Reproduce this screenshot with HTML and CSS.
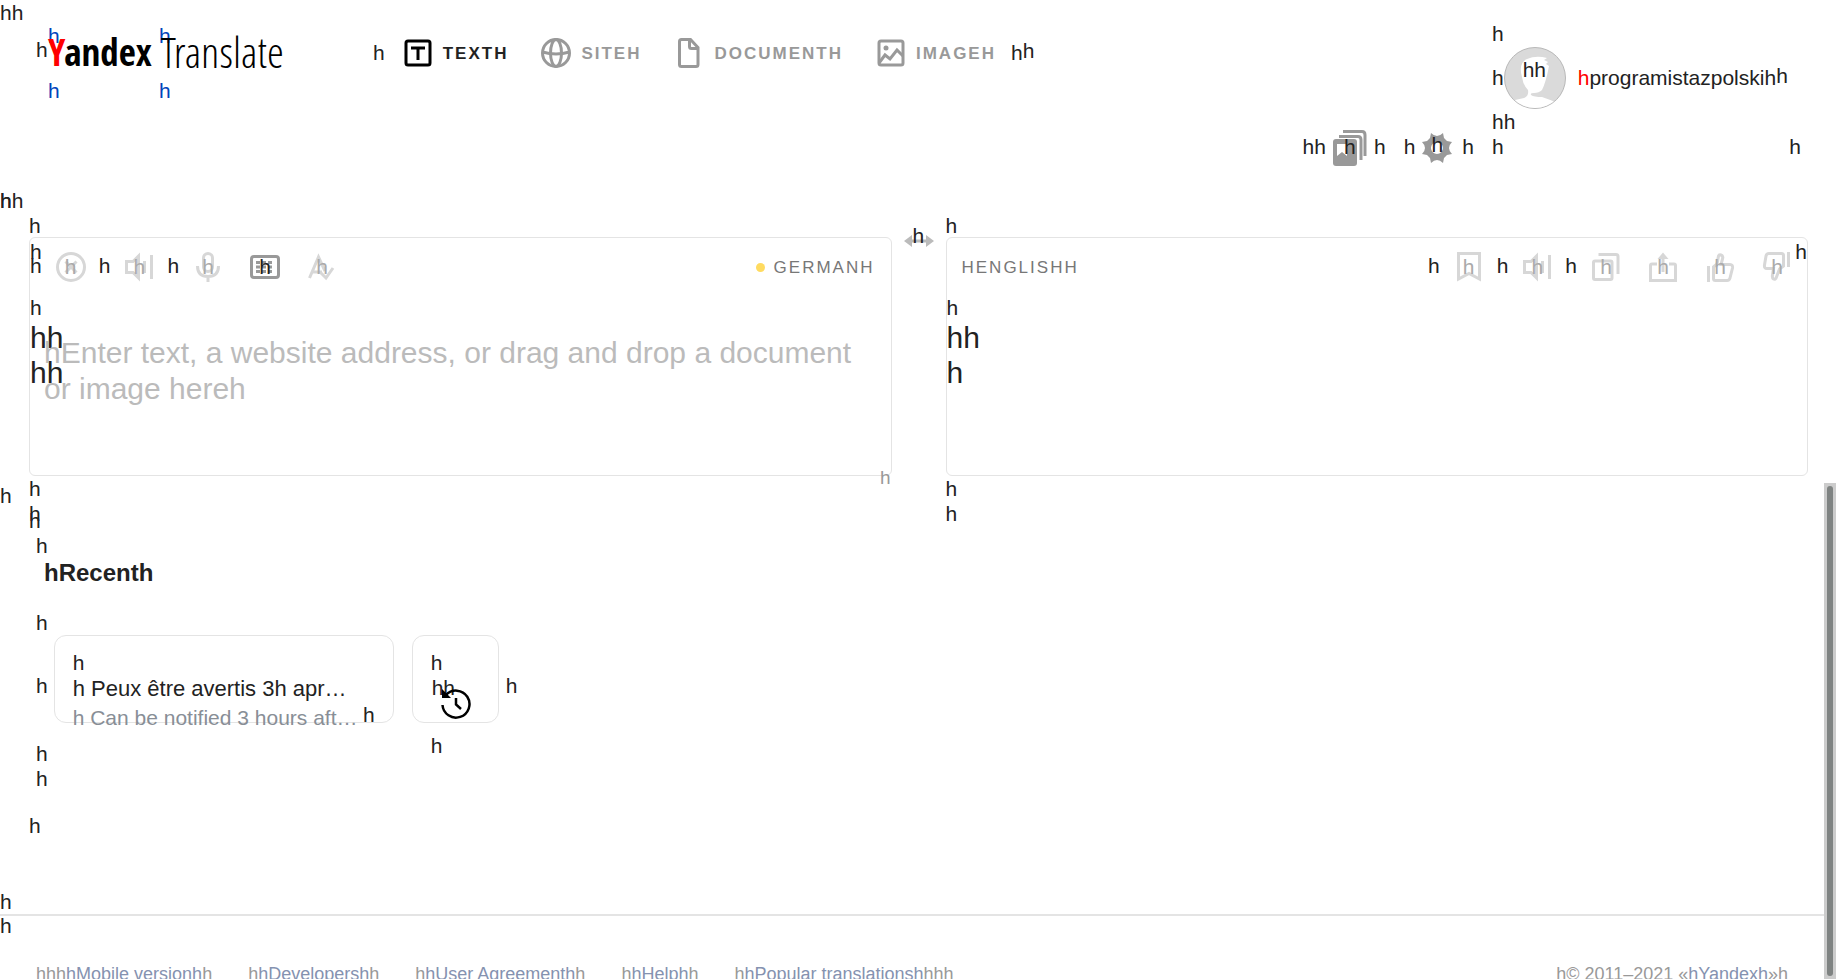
FILE: index.html
```html
<!DOCTYPE html>
<html lang="en">
<head>
<meta charset="utf-8">
<title>Yandex Translate</title>
<link rel="stylesheet" href="styles.css">
</head>
<body>
<header class="header">
  <span class="header-lead">hh</span>
  <span class="logo-lead">h</span>
  <div class="logo">
    <a href="#" class="logo-link logo-yandex"><span class="mark">h</span><span class="logo-word"><b class="red">Y</b>andex</span><span class="mark">h</span></a>
    <a href="#" class="logo-link logo-translate"><span class="mark">h</span><span class="logo-word">Translate</span><span class="mark">h</span></a>
  </div>
  <nav class="nav">
    <span class="mark nav-mark">h</span>
    <a href="#" class="tab tab-active"><svg class="icon" viewBox="0 0 30 30"><rect x="3" y="3" width="24" height="24" rx="2" fill="none" stroke="#000" stroke-width="3"/><path d="M8 10H22M15 10V22" fill="none" stroke="#000" stroke-width="3"/></svg>TEXTH</a>
    <a href="#" class="tab"><svg class="icon line" viewBox="0 0 30 30"><circle cx="15" cy="15" r="13.500"/><ellipse cx="15" cy="15" rx="5.500" ry="13.500"/><path d="M1.500 14Q15 18 28.500 14"/></svg>SITEH</a>
    <a href="#" class="tab"><svg class="icon line" viewBox="0 0 30 30"><path d="M7.500 1.500H16.500L24 9.500V26.500Q24 28.500 22 28.500H7.500Q5.500 28.500 5.500 26.500V3.500Q5.500 1.500 7.500 1.500ZM15.500 2V8.500Q15.500 10.500 17.500 10.500H24"/></svg>DOCUMENTH</a>
    <a href="#" class="tab"><svg class="icon line" viewBox="0 0 30 30"><rect x="3" y="3" width="24" height="24" rx="2"/><circle cx="10" cy="10" r="2.500" fill="#999" stroke="none"/><path d="M3 25L9 17L14 21L21 12L27 18"/></svg>IMAGEH</a>
    <span class="mark nav-end">h</span><span class="mark nav-last">h</span>
  </nav>
  <div class="tools">
    <span class="mark">hh</span>
    <button class="tool" type="button" aria-label="Collections"><svg width="34" height="36" viewBox="0 0 34 36"><path d="M10 1.500H29Q32 1.500 32 5V26M6 6.500H25Q28 6.500 28 10V30" fill="none" stroke="#999" stroke-width="3"/><rect y="9" width="24" height="27" rx="3" fill="#999"/><path d="M4 14H14V26L9 22L4 26Z" fill="#fff"/></svg><span class="over tool-over">h</span></button>
    <span class="mark">h</span>
    <span class="mark tools-split">h</span>
    <button class="tool" type="button" aria-label="Settings"><svg width="30" height="30" viewBox="0 0 30 30"><path fill="#999" fill-rule="evenodd" d="M9 0Q12 3 15 3T21 0L22 5L25 8L30 9Q27 12 27 15T30 21L25 22L22 25L21 30Q18 27 15 27T9 30L8 25L5 22L0 21Q3 18 3 15T0 9L5 8L8 5ZM15 9A6 6 0 1 0 15 21A6 6 0 1 0 15 9Z"/></svg><span class="over">h</span></button>
    <span class="mark tools-last">h</span>
  </div>
  <div class="account">
    <span class="mark">h</span>
    <div class="user">
      <span class="mark">h</span>
      <span class="avatar"><svg width="62" height="62" viewBox="0 0 62 62"><defs><clipPath id="round"><circle cx="31" cy="31" r="30"/></clipPath></defs><circle cx="31" cy="31" r="30.500" fill="#dadada" stroke="#b8b8b8"/><path clip-path="url(#round)" fill="#fff" d="M0 56Q10 53 20 51Q25 49 24 43Q19 38 18 30Q14 16 23 12Q32 8 43 11L40 13L44 15L42 17L45 19Q42 35 38 43Q35 46 30 46Q26 46 27 48Q30 50 38 50Q47 53 56 57V62H0Z"/></svg><span class="avatar-mark">hh</span></span>
      <a href="#" class="user-name"><span class="red">h</span>programistazpolskih</a><span class="mark user-end">h</span>
    </div>
    <span class="mark">hh</span>
    <div class="account-row"><span class="mark">h</span><span class="mark">h</span></div>
  </div>
</header>

<main>
  <span class="mark main-lead"><span class="heavy">h</span>h</span>
  <div class="panels">
    <section class="column">
      <span class="mark">h</span>
      <div class="panel">
        <span class="corner-left">h</span>
        <div class="toolbar">
          <span class="mark">h</span>
          <button class="action g13 faded" type="button" aria-label="Clear"><svg class="icon" viewBox="0 0 30 30"><circle cx="15" cy="15" r="13.500"/><path d="M9.500 9.500L20.500 20.500M20.500 9.500L9.500 20.500"/></svg><span class="over">h</span></button>
          <span class="mark g13">h</span>
          <button class="action g13 faded" type="button" aria-label="Listen"><svg class="icon" viewBox="0 0 30 30"><path d="M14.500 4L9 9.500H2.500V20.500H9L14.500 26ZM20.500 9V21M27.500 3V27"/></svg><span class="over">h</span></button>
          <span class="mark g13">h</span>
          <button class="action g13 faded" type="button" aria-label="Speak"><svg class="icon" viewBox="0 0 30 30"><rect x="10.500" y="1.500" width="9" height="18" rx="4.500"/><path d="M4.500 14Q4.500 24.500 15 24.500T25.500 14M15 24V30"/></svg><span class="over">h</span></button>
          <button class="action g27" type="button" aria-label="Keyboard"><svg class="icon keys" viewBox="0 0 30 30"><rect x="1.500" y="4.500" width="27" height="21" rx="2.500"/><path d="M6 10.500H24M6 15H24M6 19.500H24" stroke-dasharray="4 2"/></svg><span class="over">h</span></button>
          <button class="action g27 faded" type="button" aria-label="Spelling"><svg class="icon" viewBox="0 0 30 30"><path d="M2.500 26L11.500 5L18 19M6 20H15M13 20L19 26L26 16"/></svg><span class="over">h</span></button>
          <button class="language language-source" type="button"><i class="dot"></i>GERMANH</button>
        </div>
        <span class="mark">h</span>
        <div class="editor">
          <div class="big">hh<br>hh</div>
          <textarea class="input" aria-label="Source text" placeholder="hEnter text, a website address, or drag and drop a document or image hereh"></textarea>
        </div>
        <span class="counter">h</span>
      </div>
      <span class="mark">h</span>
      <span class="mark inset">h</span>
    </section>
    <button class="swap" type="button" aria-label="Swap languages"><svg width="30" height="12" viewBox="0 0 30 12"><path d="M0 6L8 0V4.500H22V0L30 6L22 12V7.500H8V12Z" fill="#bbb"/></svg><span>h</span></button>
    <section class="column">
      <span class="mark">h</span>
      <div class="panel">
        <div class="toolbar toolbar-target">
          <button class="language" type="button">HENGLISHH</button>
          <span class="mark push">h</span>
          <button class="action g13 faded" type="button" aria-label="Save"><svg class="icon" viewBox="0 0 30 30"><path d="M4.500 1.500H25.500V27L15 21.500L4.500 27Z"/></svg><span class="over">h</span></button>
          <span class="mark g13">h</span>
          <button class="action g13 faded" type="button" aria-label="Listen"><svg class="icon" viewBox="0 0 30 30"><path d="M14.500 4L9 9.500H2.500V20.500H9L14.500 26ZM20.500 9V21M27.500 3V27"/></svg><span class="over">h</span></button>
          <span class="mark g13">h</span>
          <button class="action g13 faded" type="button" aria-label="Copy"><svg class="icon" viewBox="0 0 30 30"><rect x="2.500" y="9" width="18.500" height="18.500" rx="1.500"/><path d="M7.500 2.500H25Q27 2.500 27 4.500V22"/></svg><span class="over">h</span></button>
          <button class="action g27 faded" type="button" aria-label="Share"><svg class="icon" viewBox="0 0 30 30"><path d="M9 12H4Q2.500 12 2.500 13.500V28.500H27.500V13.500Q27.500 12 26 12H21M15 5V20"/><path class="arrow" d="M9.500 7L15 .500L20.500 7Z"/></svg><span class="over">h</span></button>
          <button class="action g27 faded" type="button" aria-label="Good translation"><svg class="icon" viewBox="0 0 30 30"><path d="M3.500 14V30M8.500 15L12 12L13.500 4Q14 2.500 16 3Q18.500 4 17.500 7L16 12.500H25Q28 12.500 27.500 16L25 26Q24.500 28.500 22 28.500H10.500Q8.500 28.500 8.500 26.500Z"/></svg><span class="over">h</span></button>
          <button class="action g27 faded" type="button" aria-label="Bad translation"><svg class="icon" viewBox="0 0 30 30"><path d="M26.500 0V15M21.500 14L17.500 17L14.500 25Q13.500 28 11.500 27Q10 26 10.500 23L11.500 16.500H5Q2 16.500 2.500 13L4 4Q4.500 1.500 7 1.500H19.500Q21.500 1.500 21.500 3.500Z"/></svg><span class="over">h</span></button>
        </div>
        <span class="corner-right">h</span>
        <span class="mark">h</span>
        <div class="big">hh<br>h</div>
      </div>
      <span class="mark">h</span>
      <span class="mark inset">h</span>
    </section>
    <span class="edge">h</span>
    <span class="below">h</span>
  </div>

  <section class="recent">
    <span class="mark">h</span>
    <h2 class="recent-title">hRecenth</h2>
    <span class="mark">h</span>
    <div class="cards">
      <span class="mark card-side">h</span>
      <a href="#" class="card card-text"><span class="mark">h</span><span class="card-source">h Peux être avertis 3h apr…</span><span class="card-target">h Can be notified 3 hours aft…</span><span class="card-end">h</span></a>
      <button class="card card-history" type="button" aria-label="History"><span class="mark">h</span><span class="history-mark">hh</span><svg class="history-icon" viewBox="0 0 30 30"><path d="M1.500 16A13.500 13.500 0 1 0 5 6M15 9V15.500L20 20" fill="none" stroke="#000" stroke-width="2.500"/><path d="M1 0V9H10Z"/></svg><span class="card-below">h</span></button>
      <span class="mark card-side">h</span>
    </div>
    <span class="mark">h</span>
    <span class="mark">h</span>
  </section>
  <span class="mark main-end">h</span>
</main>

<footer>
  <span class="mark">h</span>
  <div class="footer">
    <span class="mark footer-mark">h</span>
    <div class="footer-row">
      <span>hhh<a href="#">hMobile versionh</a>h</span>
      <span>h<a href="#">hDevelopersh</a>h</span>
      <span>h<a href="#">hUser Agreementh</a>h</span>
      <span>h<a href="#">hHelph</a>h</span>
      <span>h<a href="#">hPopular translationsh</a>hhh</span>
      <span class="copyright">h© 2011–2021 «<a href="#">hYandexh</a>»h</span>
    </div>
  </div>
</footer>
<div class="scrollbar"><div class="thumb"></div></div>
</body>
</html>
```
FILE: styles.css
```css
* { box-sizing: border-box; }
body {
  position: relative;
  height: 100vh;
  margin: 0;
  padding-right: 12px;
  overflow: hidden;
  background: #fff;
  color: #222;
  font: 21px/25px "Liberation Sans", Arial, sans-serif;
}
a { color: inherit; text-decoration: none; }
button {
  margin: 0;
  padding: 0;
  border: 0;
  background: none;
  color: inherit;
  font: inherit;
  text-align: left;
}
svg { display: block; }
.mark { display: block; }
.heavy { text-shadow: 0 0 0 currentColor; }
.red { color: #f00; font-weight: inherit; }
.icon { width: 30px; height: 30px; flex: none; }
.line { fill: none; stroke: #999; stroke-width: 3; }

.header { display: flex; align-items: flex-start; padding-right: 23px; }
.header-lead { width: 36px; }
.logo-lead { width: 12px; padding-top: 37px; }
.logo { display: flex; padding-top: 23px; color: #04b; }
.logo-link { position: relative; display: flex; flex-direction: column; gap: 30px; }
.logo-yandex { width: 111px; }
.logo-translate { width: 213px; }
.logo-word {
  position: absolute;
  top: 5px;
  left: 2px;
  color: #000;
  font: 300 43px/48px "Open Sans Condensed Light", "Roboto Condensed Light", "Liberation Sans Narrow", "Liberation Sans", sans-serif;
}
.logo-yandex .logo-word { left: 0; font: 700 37px/48px "Open Sans Condensed", "Liberation Sans Narrow", sans-serif; }

.nav { display: flex; padding-top: 38px; }
.nav-mark { margin-top: 2px; margin-left: 1px; margin-right: 18px; }
.tab {
  display: flex;
  gap: 10px;
  align-items: center;
  height: 30px;
  margin-right: 33px;
  color: #999;
  font-size: 17px;
  font-weight: 700;
  letter-spacing: 2px;
}
.tab-active { color: #222; }
.nav-end { margin-left: -18px; margin-top: 2px; }

.tools { display: flex; align-items: center; gap: 7px; height: 25px; margin: 134px 18px 0 auto; }
.tools-split { margin-left: 11px; }
.tools-last { margin-left: 3px; }
.tool { position: relative; padding-top: 3px; }
.over { position: absolute; inset: 0; text-align: center; line-height: 30px; }
.tool-over { top: 5px; }
.account { width: 309px; padding-top: 21px; }
.user { display: flex; align-items: center; height: 63px; }
.avatar { position: relative; margin-right: 12px; }
.avatar-mark { position: absolute; top: 10px; left: 19px; }
.user-end { padding-bottom: 4px; }
.account-row { display: flex; justify-content: space-between; }

.main-lead { margin-top: 29px; }
.panels { position: relative; display: grid; grid-template-columns: 1fr 54px 1fr; padding: 0 16px 0 29px; }
.panel { position: relative; height: 239px; border: 1px solid #e4e4e4; border-radius: 6px; }
.column .panel { margin-top: -1px; }
.toolbar { display: flex; align-items: center; height: 30px; margin: 14px 16px 13px 0; }
.toolbar .mark { padding-bottom: 4px; }
.toolbar-target { margin: 14px 15px 13px; }
.action { position: relative; }
.g13 { margin-left: 14px; }
.mark.g13 { margin-left: 13px; }
.g27 { margin-left: 27px; }
.push { margin-left: auto; }
.action .icon { fill: none; stroke: #d7d7d7; stroke-width: 3; }
.action .keys { stroke: #999; }
.action .arrow { fill: #d7d7d7; stroke: none; }
.faded .over { color: #aaa; }
.language { color: #777; font-size: 17px; letter-spacing: 2px; }
.language-source { display: flex; align-items: center; margin-left: auto; }
.dot { width: 9px; height: 9px; margin-right: 9px; border-radius: 50%; background: #ffdb60; }
.corner-left { position: absolute; top: 1px; left: 0; }
.corner-right { position: absolute; top: 1px; right: 0; }
.counter { position: absolute; right: 0; bottom: -15px; color: #999; font-size: 19px; }
.big { font-size: 30px; line-height: 35px; }
.editor { display: grid; }
.editor > * { grid-area: 1 / 1; }
.input {
  height: 140px;
  padding: 15px 14px 0;
  border: 0;
  outline: 0;
  background: none;
  color: #222;
  font: 30px/36px "Liberation Sans", Arial, sans-serif;
  resize: none;
}
.input::placeholder { color: #bbb; }
.swap { position: relative; align-self: start; justify-self: center; width: 30px; height: 25px; margin-top: 10px; padding-top: 11px; }
.swap span { position: absolute; top: 0; left: 9px; }
.column { padding-bottom: 2px; }
.edge { position: absolute; left: 0; bottom: 20px; }
.below { position: absolute; left: 29px; bottom: -5px; }

.recent { padding: 5px 36px 0; }
.recent-title { height: 52px; margin: 0; padding: 1px 8px 0; font-size: 24px; line-height: 28px; font-weight: 700; }
.cards { display: flex; margin-bottom: 18px; }
.card-side { margin-top: 38px; }
.card {
  position: relative;
  display: flex;
  flex-direction: column;
  align-items: flex-start;
  height: 88px;
  padding: 14px 18px 0;
  border: 1px solid #e4e4e4;
  border-radius: 12px;
}
.card-text { width: 340px; margin-left: 6px; margin-right: 18px; }
.card-source { font-size: 22px; line-height: 28px; white-space: nowrap; }
.card-target { color: #888e96; font-size: 21px; line-height: 29px; white-space: nowrap; }
.card-end { position: absolute; right: 18px; bottom: -5px; }
.card-history { width: 87px; margin-right: 7px; }
.history-mark { padding-left: 1px; }
.history-icon { position: absolute; top: 53px; left: 28px; width: 30px; height: 30px; }
.card-below { position: absolute; top: 97px; left: 18px; }
.main-end { margin-top: 22px; padding-left: 29px; }

footer { margin-top: 51px; }
.footer { border-top: 2px solid #e4e4e4; }
.footer-mark { margin-top: -3px; }
.footer-row {
  display: flex;
  gap: 36px;
  padding: 25px 36px 0;
  color: #999;
  font-size: 18px;
  line-height: 22px;
  white-space: nowrap;
}
.footer-row a { color: #8592b0; }
.copyright { margin-left: auto; }
.scrollbar { position: absolute; top: 483px; right: 0; bottom: 0; width: 12px; padding: 3px; background: #ccc; }
.thumb { height: 100%; border-radius: 3px; background: #7f8382; }
```
